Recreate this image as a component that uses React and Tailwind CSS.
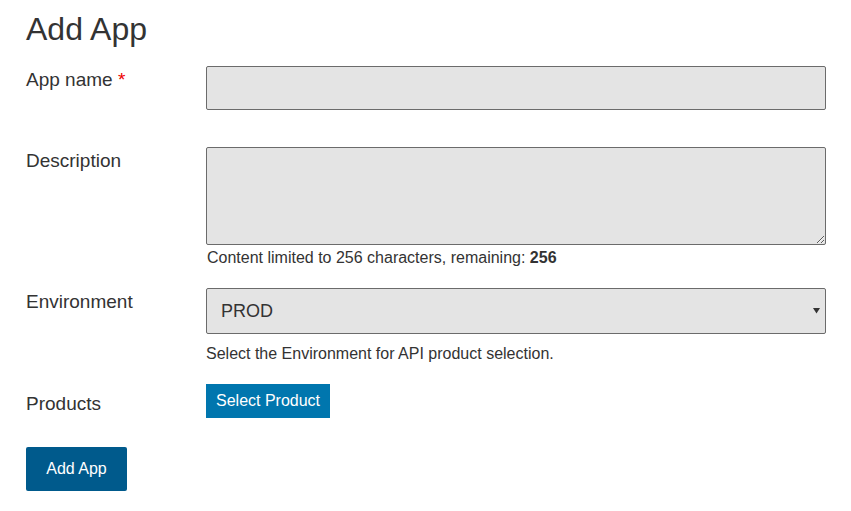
export default function App() {
  return (
    <div
      className="min-h-[511px] bg-white px-[26px] pt-[12px] text-[#333]"
      style={{ fontFamily: '"Liberation Sans", Arial, sans-serif' }}
    >
      <h1 className="text-[32px] leading-[35px] font-normal mb-[19px]">Add App</h1>

      <form className="w-[800px]">
        <div className="flex mb-[37px]">
          <label className="w-[180px] shrink-0 text-[19px] leading-[28px]">
            App name <span className="text-[#e00]">*</span>
          </label>
          <input
            type="text"
            className="w-[620px] h-[44px] bg-[#e4e4e4] border border-[#6b6b6b] rounded-[2px] px-[14px] text-[18px] outline-none"
          />
        </div>

        <div className="flex mb-[18px]">
          <label className="w-[180px] shrink-0 text-[19px] leading-[28px]">Description</label>
          <div className="w-[620px]">
            <textarea className="block w-[620px] h-[98px] bg-[#e4e4e4] border border-[#6b6b6b] rounded-[2px] px-[14px] text-[18px] outline-none" />
            <p className="text-[16px] leading-[24px] mt-[1px] pl-[1px]">
              Content limited to 256 characters, remaining: <b>256</b>
            </p>
          </div>
        </div>

        <div className="flex mb-[18px]">
          <label className="w-[180px] shrink-0 text-[19px] leading-[28px]">Environment</label>
          <div className="w-[620px]">
            <div className="relative">
              <select className="block appearance-none w-[620px] h-[46px] bg-[#e4e4e4] border border-[#6b6b6b] rounded-[2px] pl-[14px] text-[18px] text-[#333] outline-none">
                <option>PROD</option>
              </select>
              <svg
                className="absolute right-[6px] top-[19px]"
                width="7"
                height="7"
                viewBox="0 0 7 7"
              >
                <path d="M0 1h7L3.5 6.5z" fill="#333" />
              </svg>
            </div>
            <p className="text-[16px] leading-[24px] mt-[8px]">
              Select the Environment for API product selection.
            </p>
          </div>
        </div>

        <div className="flex items-center mb-[29px]">
          <label className="w-[180px] shrink-0 text-[19px] leading-[28px] pt-[6px]">Products</label>
          <button
            type="button"
            className="h-[34px] px-[10px] bg-[#0076ae] text-white text-[16px]"
          >
            Select Product
          </button>
        </div>

        <button
          type="button"
          className="h-[44px] w-[101px] bg-[#005a8c] text-white text-[16px] rounded-[2px]"
        >
          Add App
        </button>
      </form>
    </div>
  );
}
